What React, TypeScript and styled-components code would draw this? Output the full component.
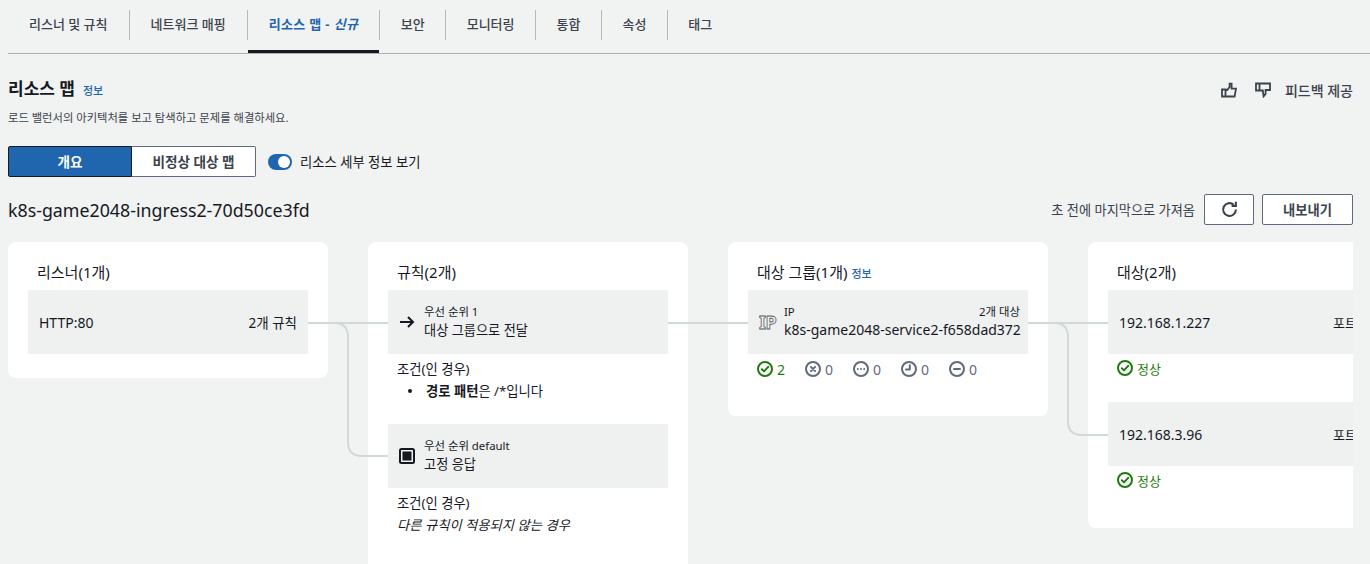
import styled, { createGlobalStyle } from "styled-components"

const GlobalStyle = createGlobalStyle`
    html, body {
        margin: 0;
        padding: 0;
        height: 564px;
        overflow: hidden;
        background: #f1f2f2;
    }
    body {
        font-family: "Noto Sans", "Noto Sans CJK KR", sans-serif;
        color: #16191f;
    }
`

const Page = styled.div`
    width: 1370px;
    height: 564px;
    overflow: hidden;
    padding-left: 8px;
    box-sizing: border-box;
`

const TabBar = styled.div`
    display: flex;
    height: 54px;
    box-sizing: border-box;
    border-bottom: 1px solid #a9b1b1;
    padding-top: 10px;
`

const Tab = styled.div<{ $active?: boolean }>`
    position: relative;
    height: 30px;
    box-sizing: border-box;
    padding: 0 21px 3px;
    display: flex;
    align-items: center;
    font-size: 13px;
    font-weight: ${(p) => (p.$active ? 700 : 500)};
    letter-spacing: ${(p) => (p.$active ? "0.35px" : "0")};
    white-space: pre;
    color: ${(p) => (p.$active ? "#1f66ae" : "#3b434d")};
    border-right: 1px solid #b4baba;

    &:nth-child(n + 4) {
        padding-left: 20.5px;
        padding-right: 20.5px;
    }

    &:last-child {
        border-right: none;
    }

    em {
        font-style: italic;
    }

    ${(p) =>
        p.$active &&
        `
        &::after {
            content: "";
            position: absolute;
            left: 0;
            right: 0;
            bottom: -13px;
            height: 3px;
            background: #16191f;
        }
    `}
`

const HeaderRow = styled.div`
    display: flex;
    justify-content: space-between;
    width: 1345px;
    margin-top: 23px;
`

const TitleLine = styled.div`
    display: flex;
    align-items: baseline;
    gap: 8px;
`

const PageTitle = styled.h1`
    margin: 0;
    font-size: 17px;
    line-height: 24px;
    font-weight: 700;
`

const InfoLink = styled.a`
    font-size: 11px;
    line-height: 16px;
    font-weight: 500;
    color: #1f66ae;
`

const Subtitle = styled.p`
    margin: 9px 0 0;
    font-size: 11.3px;
    line-height: 16px;
    color: #3b434d;
`

const Feedback = styled.div`
    display: flex;
    align-items: center;
    gap: 14px;
    height: 24px;
    margin-top: 1px;
    font-size: 14px;
    font-weight: 500;
    color: #3b434d;
`

const FeedbackIcon = styled.svg`
    width: 16px;
    height: 16px;
    fill: none;
    stroke: #3b434d;
    stroke-width: 1.8;

    &:first-child {
        margin-right: 4px;
    }
`

const ControlsRow = styled.div`
    display: flex;
    align-items: center;
    margin-top: 20px;
    height: 31px;
`

const Segment = styled.div<{ $selected?: boolean }>`
    width: 124px;
    height: 31px;
    box-sizing: border-box;
    padding-bottom: 1px;
    display: flex;
    align-items: center;
    justify-content: center;
    font-size: 13.6px;
    font-weight: 700;
    color: ${(p) => (p.$selected ? "#fff" : "#3b434d")};
    background: ${(p) => (p.$selected ? "#1f66ae" : "#fff")};
    border: 1px solid ${(p) => (p.$selected ? "#16191f" : "#5f6b7a")};
    border-radius: ${(p) => (p.$selected ? "2px 0 0 2px" : "0 2px 2px 0")};
    border-left-width: ${(p) => (p.$selected ? "1px" : "0")};
`

const ToggleTrack = styled.div`
    position: relative;
    width: 24px;
    height: 16px;
    margin-left: 12px;
    border-radius: 8px;
    background: #1f66ae;

    &::after {
        content: "";
        position: absolute;
        right: 2px;
        top: 2px;
        width: 12px;
        height: 12px;
        border-radius: 50%;
        background: #fff;
    }
`

const ToggleLabel = styled.span`
    margin-left: 8px;
    font-size: 13.3px;
    color: #16191f;
`

const NameRow = styled.div`
    display: flex;
    align-items: center;
    justify-content: space-between;
    width: 1345px;
    height: 31px;
    margin-top: 17px;
`

const LoadBalancerName = styled.div`
    font-size: 17.8px;
`

const NameActions = styled.div`
    display: flex;
    align-items: center;
`

const FetchedAt = styled.span`
    margin-right: 9px;
    font-size: 13.2px;
    color: #3b434d;
`

const ActionButton = styled.div<{ $width: number }>`
    width: ${(p) => p.$width}px;
    height: 31px;
    box-sizing: border-box;
    margin-left: ${(p) => (p.$width > 60 ? "8px" : "0")};
    display: flex;
    align-items: center;
    justify-content: center;
    background: #fff;
    border: 1px solid #5f6b7a;
    border-radius: 2px;
    font-size: 13.3px;
    font-weight: 700;
    color: #3b434d;
`

const RefreshIcon = styled.svg`
    width: 17px;
    height: 17px;
    fill: none;
    stroke: #3b434d;
    stroke-width: 2;
`

const Canvas = styled.div`
    position: relative;
    display: flex;
    align-items: flex-start;
    gap: 40px;
    width: 1345px;
    margin-top: 17px;
    overflow: hidden;
`

const Connectors = styled.svg`
    position: absolute;
    left: 0;
    top: 0;
    width: 1345px;
    height: 322px;
    fill: none;
    stroke: #d1d8d8;
    stroke-width: 2;
    pointer-events: none;
`

const Card = styled.section<{ $height: number }>`
    flex: 0 0 320px;
    min-width: 0;
    height: ${(p) => p.$height}px;
    box-sizing: border-box;
    padding: 20px 20px 0;
    background: #fff;
    border-radius: 8px;
`

const CardTitle = styled.h2`
    display: flex;
    align-items: baseline;
    gap: 4px;
    height: 20px;
    margin: 0 0 8px 9px;
    font-size: 15px;
    line-height: 20px;
    font-weight: 400;
    color: #16191f;
`

const NodeRow = styled.div<{ $tight?: boolean }>`
    display: flex;
    align-items: center;
    height: 64px;
    box-sizing: border-box;
    padding: 0 ${(p) => (p.$tight ? "8px" : "11px")} 0 11px;
    background: #eff0f0;
    border-radius: 2px;
    font-size: 13.5px;
    white-space: nowrap;
`

const Spread = styled.div`
    display: flex;
    justify-content: space-between;
    align-items: center;
    flex: 1;
`

const LatinText = styled.span`
    font-size: 14px;
`

const TargetPort = styled.span`
    margin-right: 20px;
    font-size: 13px;
`

const NodeIcon = styled.svg`
    flex: 0 0 16px;
    width: 16px;
    height: 16px;
    margin-right: 9px;
    fill: none;
    stroke: #16191f;
    stroke-width: 2;
`

const IpGlyph = styled.span`
    flex: 0 0 16px;
    width: 16px;
    margin-right: 9px;
    font-size: 18px;
    line-height: 16px;
    font-weight: 700;
    letter-spacing: -0.5px;
    color: #eff0f0;
    -webkit-text-stroke: 0.8px #545b64;
`

const NodeText = styled.div`
    flex: 1;
    min-width: 0;
`

const SmallLine = styled.div`
    display: flex;
    justify-content: space-between;
    font-size: 11.4px;
    line-height: 16px;
    color: #16191f;
`

const MainLine = styled.div`
    font-size: 13.2px;
    line-height: 20px;
    color: #16191f;
`

const ServiceName = styled(MainLine)`
    font-size: 14px;
`

const Conditions = styled.div`
    margin: 5px 0 23px 9px;
    font-size: 13.3px;
    line-height: 20px;
`

const ConditionList = styled.ul`
    margin: 2px 0 0;
    padding-left: 29px;
    list-style: none;

    li {
        position: relative;
    }

    li::before {
        content: "";
        position: absolute;
        left: -18px;
        top: 8px;
        width: 4px;
        height: 4px;
        border-radius: 50%;
        background: #16191f;
    }
`

const ElseNote = styled.em`
    display: block;
    margin-top: 2px;
`

const StatusRow = styled.div`
    display: flex;
    gap: 20px;
    margin: 5px 0 0 9px;
`

const Status = styled.div<{ $ok?: boolean }>`
    display: flex;
    align-items: center;
    gap: 4px;
    height: 20px;
    font-size: 14px;
    color: ${(p) => (p.$ok ? "#1f7a10" : "#5f6b7a")};
`

const StatusIconSvg = styled.svg`
    width: 16px;
    height: 16px;
    fill: none;
    stroke: currentColor;
    stroke-width: 2;
    stroke-linecap: round;
    stroke-linejoin: round;
`

const TargetBlock = styled.div`
    margin-bottom: 24px;
`

const HealthRow = styled.div`
    margin: 4px 0 0 9px;
`

const HealthLabel = styled.span`
    font-size: 13px;
`

type StatusKind = "ok" | "error" | "pending" | "waiting" | "stopped"

const StatusIcon = ({ kind }: { kind: StatusKind }) => (
    <StatusIconSvg viewBox="0 0 16 16">
        <circle cx="8" cy="8" r="7" />
        {kind === "ok" && <path d="M4.8 8.2 7 10.4 11.2 5.8" />}
        {kind === "error" && <path d="M5.9 5.9 10.1 10.1M10.1 5.9 5.9 10.1" />}
        {kind === "pending" && <path d="M4.8 8h.01M8 8h.01M11.2 8h.01" />}
        {kind === "waiting" && <path d="M8.8 4.2V8.6H5" />}
        {kind === "stopped" && <path d="M5 8h6" />}
    </StatusIconSvg>
)

const tabs = ["리스너 및 규칙", "네트워크 매핑", "리소스 맵 - ", "보안", "모니터링", "통합", "속성", "태그"]

const stats: { kind: StatusKind; count: number }[] = [
    { kind: "ok", count: 2 },
    { kind: "error", count: 0 },
    { kind: "pending", count: 0 },
    { kind: "waiting", count: 0 },
    { kind: "stopped", count: 0 },
]

const targets = ["192.168.1.227", "192.168.3.96"]

export default function App() {
    return (
        <>
            <GlobalStyle />
            <Page>
                <TabBar>
                    {tabs.map((tab) => {
                        const active = tab.startsWith("리소스")
                        return (
                            <Tab key={tab} $active={active}>
                                {tab}
                                {active && <em>신규</em>}
                            </Tab>
                        )
                    })}
                </TabBar>

                <HeaderRow>
                    <div>
                        <TitleLine>
                            <PageTitle>리소스 맵</PageTitle>
                            <InfoLink>정보</InfoLink>
                        </TitleLine>
                        <Subtitle>로드 밸런서의 아키텍처를 보고 탐색하고 문제를 해결하세요.</Subtitle>
                    </div>
                    <Feedback>
                        <FeedbackIcon viewBox="0 0 16 16">
                            <path d="M1 7.5h3.5v7H1zM4.5 8H6.2L8.6 5V1.6H10.6V6.6H15L13.6 14.5H4.5" />
                        </FeedbackIcon>
                        <FeedbackIcon viewBox="0 0 16 16">
                            <path d="M1 1.5h3.5v7H1zM4.5 1.5H15V8H10.6V12L8.6 14.4 7.8 8.5H4.5" />
                        </FeedbackIcon>
                        피드백 제공
                    </Feedback>
                </HeaderRow>

                <ControlsRow>
                    <Segment $selected>개요</Segment>
                    <Segment>비정상 대상 맵</Segment>
                    <ToggleTrack />
                    <ToggleLabel>리소스 세부 정보 보기</ToggleLabel>
                </ControlsRow>

                <NameRow>
                    <LoadBalancerName>k8s-game2048-ingress2-70d50ce3fd</LoadBalancerName>
                    <NameActions>
                        <FetchedAt>초 전에 마지막으로 가져옴</FetchedAt>
                        <ActionButton $width={50}>
                            <RefreshIcon viewBox="0 0 16 16">
                                <path d="M14 8A6 6 0 1 1 11.8 3.4M14 .8V4.6H10" />
                            </RefreshIcon>
                        </ActionButton>
                        <ActionButton $width={91}>내보내기</ActionButton>
                    </NameActions>
                </NameRow>

                <Canvas>
                    <Card $height={136}>
                        <CardTitle>리스너(1개)</CardTitle>
                        <NodeRow>
                            <Spread>
                                <LatinText>HTTP:80</LatinText>
                                <span>2개 규칙</span>
                            </Spread>
                        </NodeRow>
                    </Card>

                    <Card $height={340}>
                        <CardTitle>규칙(2개)</CardTitle>
                        <NodeRow>
                            <NodeIcon viewBox="0 0 16 16">
                                <path d="M1 8h13M9 3l5 5-5 5" />
                            </NodeIcon>
                            <NodeText>
                                <SmallLine>우선 순위 1</SmallLine>
                                <MainLine>대상 그룹으로 전달</MainLine>
                            </NodeText>
                        </NodeRow>
                        <Conditions>
                            조건(인 경우)
                            <ConditionList>
                                <li>
                                    <b>경로 패턴</b>은 /*입니다
                                </li>
                            </ConditionList>
                        </Conditions>
                        <NodeRow>
                            <NodeIcon viewBox="0 0 16 16">
                                <rect x="1" y="1" width="14" height="14" rx="1.5" />
                                <rect x="3.5" y="3.5" width="9" height="9" fill="#16191f" stroke="none" />
                            </NodeIcon>
                            <NodeText>
                                <SmallLine>우선 순위 default</SmallLine>
                                <MainLine>고정 응답</MainLine>
                            </NodeText>
                        </NodeRow>
                        <Conditions>
                            조건(인 경우)
                            <ElseNote>다른 규칙이 적용되지 않는 경우</ElseNote>
                        </Conditions>
                    </Card>

                    <Card $height={174}>
                        <CardTitle>
                            대상 그룹(1개) <InfoLink>정보</InfoLink>
                        </CardTitle>
                        <NodeRow $tight>
                            <IpGlyph>IP</IpGlyph>
                            <NodeText>
                                <SmallLine>
                                    <span>IP</span>
                                    <span>2개 대상</span>
                                </SmallLine>
                                <ServiceName>k8s-game2048-service2-f658dad372</ServiceName>
                            </NodeText>
                        </NodeRow>
                        <StatusRow>
                            {stats.map((stat) => (
                                <Status key={stat.kind} $ok={stat.kind === "ok"}>
                                    <StatusIcon kind={stat.kind} />
                                    {stat.count}
                                </Status>
                            ))}
                        </StatusRow>
                    </Card>

                    <Card $height={286}>
                        <CardTitle>대상(2개)</CardTitle>
                        {targets.map((ip) => (
                            <TargetBlock key={ip}>
                                <NodeRow>
                                    <Spread>
                                        <LatinText>{ip}</LatinText>
                                        <TargetPort>포트</TargetPort>
                                    </Spread>
                                </NodeRow>
                                <HealthRow>
                                    <Status $ok>
                                        <StatusIcon kind="ok" />
                                        <HealthLabel>정상</HealthLabel>
                                    </Status>
                                </HealthRow>
                            </TargetBlock>
                        ))}
                    </Card>

                    <Connectors viewBox="0 0 1345 322">
                        <path d="M300 81H380" />
                        <path d="M320 81H326Q340 81 340 95V200Q340 214 354 214H380" />
                        <path d="M660 81H740" />
                        <path d="M1020 81H1100" />
                        <path d="M1040 81H1046Q1060 81 1060 95V179Q1060 193 1074 193H1100" />
                    </Connectors>
                </Canvas>
            </Page>
        </>
    )
}
